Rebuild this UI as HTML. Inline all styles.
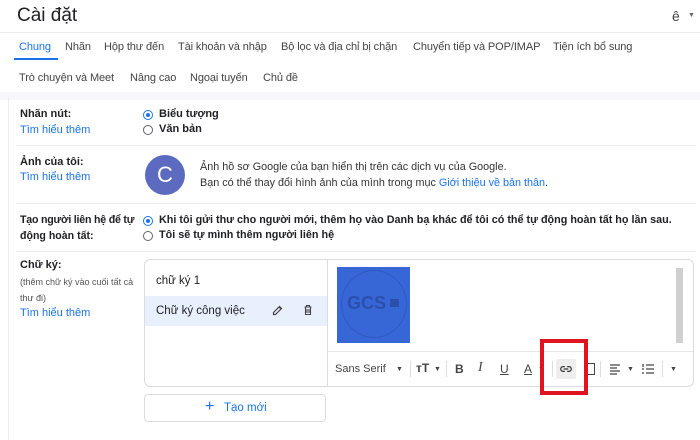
<!DOCTYPE html>
<html><head><meta charset="utf-8"><style>
*{margin:0;padding:0;box-sizing:border-box}
body{width:700px;height:440px;overflow:hidden;background:#fff;font-family:"Liberation Sans","Noto Sans CJK SC",sans-serif;color:#202124;position:relative;font-size:11px}
.a{position:absolute;white-space:nowrap}
.b{font-weight:bold}
.l{color:#1a73e8}
.hr{position:absolute;height:1px;background:#eceff1}
.r{position:absolute;width:10px;height:10px;border-radius:50%;border:1px solid #5f6368}
.r.on{border-color:#1a73e8}
.r.on::after{content:"";position:absolute;left:2px;top:2px;width:4px;height:4px;border-radius:50%;background:#1a73e8}
.tab{font-size:11px;color:#444;letter-spacing:-0.1px}
.tb{position:absolute;top:362px;font-size:12px;color:#444}
</style></head><body>
<div class="a" style="left:17px;top:5px;font-size:19px;color:#202124">Cài đặt</div>
<div class="a" style="left:672px;top:8px;font-size:14px;color:#444">ê</div>
<div class="a" style="left:688px;top:12px;font-size:7px;color:#666">▼</div>
<div class="hr" style="left:0;top:32px;width:700px"></div>
<div class="a tab" style="left:19px;top:41px;color:#1a73e8">Chung</div>
<div style="position:absolute;left:14px;top:58px;width:44px;height:2px;background:#1a73e8"></div>
<div class="a tab" style="left:65px;top:41px">Nhãn</div>
<div class="a tab" style="left:104px;top:41px">Hộp thư đến</div>
<div class="a tab" style="left:178px;top:41px">Tài khoản và nhập</div>
<div class="a tab" style="left:281px;top:41px">Bộ lọc và địa chỉ bị chặn</div>
<div class="a tab" style="left:413px;top:41px">Chuyển tiếp và POP/IMAP</div>
<div class="a tab" style="left:553px;top:41px">Tiện ích bổ sung</div>
<div class="a tab" style="left:19px;top:72px">Trò chuyện và Meet</div>
<div class="a tab" style="left:130px;top:72px">Nâng cao</div>
<div class="a tab" style="left:190px;top:72px">Ngoại tuyến</div>
<div class="a tab" style="left:263px;top:72px">Chủ đề</div>
<div style="position:absolute;left:0;top:92px;width:700px;height:8px;background:#f6f7f8"></div>
<div style="position:absolute;left:8px;top:98px;width:1px;height:342px;background:#eee"></div>

<div class="a b" style="left:20px;top:108px">Nhãn nút:</div>
<div class="a l" style="left:20px;top:124px">Tìm hiểu thêm</div>
<div class="r on" style="left:143px;top:110px"></div><div class="a b" style="left:159px;top:108px">Biểu tượng</div>
<div class="r" style="left:143px;top:125px"></div><div class="a b" style="left:159px;top:123px">Văn bản</div>
<div class="hr" style="left:16px;top:145px;width:680px"></div>

<div class="a b" style="left:20px;top:156px">Ảnh của tôi:</div>
<div class="a l" style="left:20px;top:171px">Tìm hiểu thêm</div>
<div style="position:absolute;left:145px;top:155px;width:40px;height:40px;border-radius:50%;background:#5c6bc0;color:#fff;font-size:22px;text-align:center;line-height:40px">C</div>
<div class="a" style="left:200px;top:161px;color:#333;font-size:10.8px">Ảnh hồ sơ Google của bạn hiển thị trên các dịch vụ của Google.</div>
<div class="a" style="left:200px;top:177px;color:#333;font-size:10.8px">Bạn có thể thay đổi hình ảnh của mình trong mục <span class="l">Giới thiệu về bản thân</span>.</div>
<div class="hr" style="left:16px;top:203px;width:680px"></div>

<div class="a b" style="left:20px;top:214px;font-size:10.6px;letter-spacing:-0.2px">Tạo người liên hệ để tự</div>
<div class="a b" style="left:20px;top:230px;font-size:10.6px">động hoàn tất:</div>
<div class="r on" style="left:143px;top:216px"></div><div class="a b" style="left:159px;top:214px;font-size:10.8px">Khi tôi gửi thư cho người mới, thêm họ vào Danh bạ khác để tôi có thể tự động hoàn tất họ lần sau.</div>
<div class="r" style="left:143px;top:231px"></div><div class="a b" style="left:159px;top:229px;font-size:10.8px">Tôi sẽ tự mình thêm người liên hệ</div>
<div class="hr" style="left:16px;top:251px;width:680px"></div>

<div class="a b" style="left:20px;top:259px">Chữ ký:</div>
<div class="a" style="left:20px;top:277px;font-size:9px;color:#555">(thêm chữ ký vào cuối tất cả</div>
<div class="a" style="left:20px;top:293px;font-size:9px;color:#555">thư đi)</div>
<div class="a l" style="left:20px;top:307px">Tìm hiểu thêm</div>

<div style="position:absolute;left:144px;top:259px;width:550px;height:128px;border:1px solid #dadce0;border-radius:6px"></div>
<div style="position:absolute;left:327px;top:259px;width:1px;height:128px;background:#dadce0"></div>
<div class="a" style="left:156px;top:275px;font-size:11.5px">chữ ký 1</div>
<div style="position:absolute;left:145px;top:296px;width:182px;height:30px;background:#e8f0fe"></div>
<div class="a" style="left:156px;top:305px;font-size:11.5px">Chữ ký công việc</div>
<svg class="a" style="left:272px;top:304px" width="12" height="12" viewBox="0 0 24 24"><path d="M3 21v-4L15 5l4 4L7 21zM14 6l4 4" fill="none" stroke="#444" stroke-width="2.4"/></svg>
<svg class="a" style="left:302px;top:304px" width="12" height="12" viewBox="0 0 24 24"><path d="M5 6h14M9 6V3h6v3M7 6v15h10V6M10 10v8M14 10v8" fill="none" stroke="#444" stroke-width="2.2"/></svg>

<div style="position:absolute;left:337px;top:267px;width:73px;height:76px;background:#3766d6"></div>
<div style="position:absolute;left:341px;top:270px;width:66px;height:68px;border-radius:50%;border:1px solid #2f58c0"></div>
<div class="a b" style="left:347px;top:293px;font-size:18px;color:#2c4fae">GCS</div>
<div style="position:absolute;left:390px;top:299px;width:9px;height:8px;background:#2c4fae"></div>
<div style="position:absolute;left:676px;top:268px;width:7px;height:75px;background:#d0d0d0"></div>
<div style="position:absolute;left:328px;top:351px;width:365px;height:1px;background:#e6e6e6"></div>
<div class="tb" style="left:335px;font-size:11px;top:363px">Sans Serif</div>
<div class="tb" style="left:396px;font-size:7px;top:366px">▼</div>
<div style="position:absolute;left:410px;top:361px;width:1px;height:16px;background:#ddd"></div>
<div class="tb b" style="left:416px;top:361px">тT</div><div class="tb" style="left:434px;font-size:7px;top:366px">▼</div>
<div style="position:absolute;left:446px;top:361px;width:1px;height:16px;background:#ddd"></div>
<div class="tb b" style="left:455px">B</div>
<div class="tb" style="left:478px;font-style:italic;font-family:'Liberation Serif',serif;font-size:14px;top:360px">I</div>
<div class="tb" style="left:500px;text-decoration:underline">U</div>
<div class="tb" style="left:524px;text-decoration:underline">A</div><div class="tb" style="left:538px;font-size:7px;top:366px">▼</div>
<div style="position:absolute;left:552px;top:361px;width:1px;height:16px;background:#ddd"></div>
<div style="position:absolute;left:556px;top:359px;width:20px;height:20px;background:#eee;border-radius:2px"></div>
<svg class="a" style="left:558px;top:362px" width="16" height="14" viewBox="0 0 24 24"><path d="M10 8H7a4 4 0 0 0 0 8h3M14 8h3a4 4 0 0 1 0 8h-3M8 12h8" fill="none" stroke="#333" stroke-width="2.2"/></svg>
<div style="position:absolute;left:586px;top:363px;width:9px;height:12px;border:1.5px solid #444"></div>
<div style="position:absolute;left:600px;top:361px;width:1px;height:16px;background:#ddd"></div>
<svg class="a" style="left:609px;top:363px" width="12" height="12" viewBox="0 0 12 12"><path d="M1 2h10M1 5h7M1 8h10M1 11h7" stroke="#444" stroke-width="1.3"/></svg>
<div class="tb" style="left:627px;font-size:7px;top:366px">▼</div>
<svg class="a" style="left:642px;top:363px" width="12" height="12" viewBox="0 0 12 12"><path d="M4 2h8M4 6h8M4 10h8M1 1v3M1 5v2M1 9v2" stroke="#444" stroke-width="1.3"/></svg>
<div style="position:absolute;left:662px;top:361px;width:1px;height:16px;background:#ddd"></div>
<div class="tb" style="left:670px;font-size:7px;top:366px">▼</div>

<div style="position:absolute;left:540px;top:339px;width:48px;height:56px;border:4px solid #e0141e"></div>

<div style="position:absolute;left:144px;top:394px;width:182px;height:28px;border:1px solid #dadce0;border-radius:4px"></div>
<div class="a l" style="left:205px;top:398px;font-size:16px">+</div>
<div class="a l" style="left:224px;top:402px;font-size:11.5px">Tạo mới</div>
</body></html>
